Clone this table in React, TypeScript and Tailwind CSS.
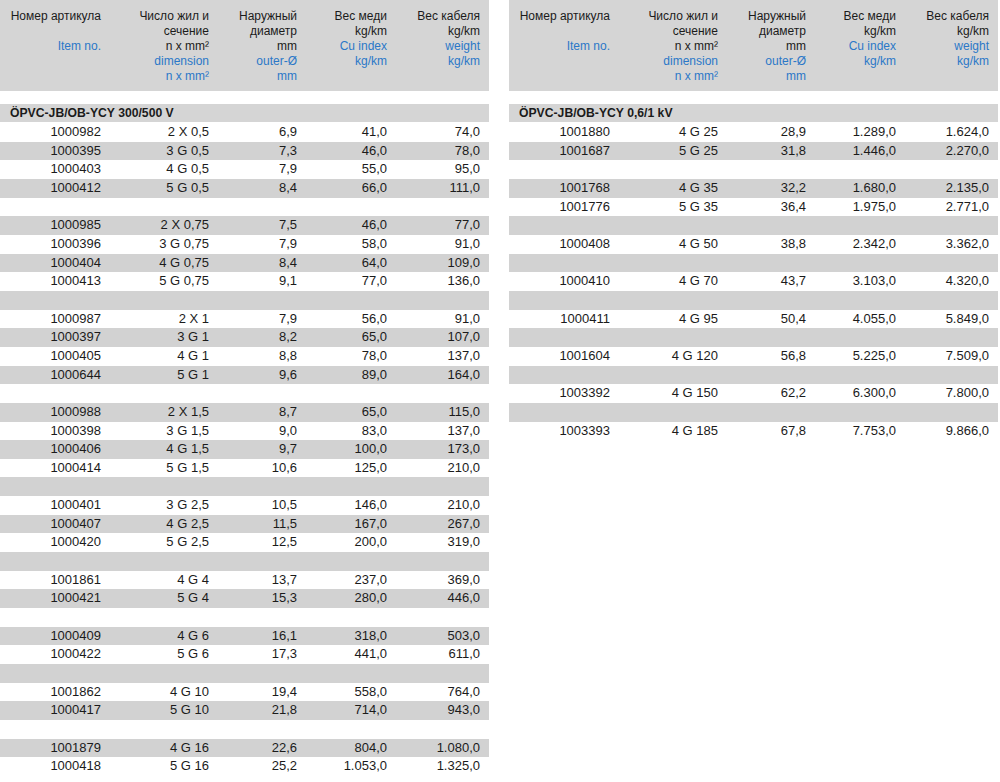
type Row = [string, string, string, string, string] | null;

const LEFT_ROWS: Row[] = [
  ["1000982", "2 X 0,5", "6,9", "41,0", "74,0"],
  ["1000395", "3 G 0,5", "7,3", "46,0", "78,0"],
  ["1000403", "4 G 0,5", "7,9", "55,0", "95,0"],
  ["1000412", "5 G 0,5", "8,4", "66,0", "111,0"],
  null,
  ["1000985", "2 X 0,75", "7,5", "46,0", "77,0"],
  ["1000396", "3 G 0,75", "7,9", "58,0", "91,0"],
  ["1000404", "4 G 0,75", "8,4", "64,0", "109,0"],
  ["1000413", "5 G 0,75", "9,1", "77,0", "136,0"],
  null,
  ["1000987", "2 X 1", "7,9", "56,0", "91,0"],
  ["1000397", "3 G 1", "8,2", "65,0", "107,0"],
  ["1000405", "4 G 1", "8,8", "78,0", "137,0"],
  ["1000644", "5 G 1", "9,6", "89,0", "164,0"],
  null,
  ["1000988", "2 X 1,5", "8,7", "65,0", "115,0"],
  ["1000398", "3 G 1,5", "9,0", "83,0", "137,0"],
  ["1000406", "4 G 1,5", "9,7", "100,0", "173,0"],
  ["1000414", "5 G 1,5", "10,6", "125,0", "210,0"],
  null,
  ["1000401", "3 G 2,5", "10,5", "146,0", "210,0"],
  ["1000407", "4 G 2,5", "11,5", "167,0", "267,0"],
  ["1000420", "5 G 2,5", "12,5", "200,0", "319,0"],
  null,
  ["1001861", "4 G 4", "13,7", "237,0", "369,0"],
  ["1000421", "5 G 4", "15,3", "280,0", "446,0"],
  null,
  ["1000409", "4 G 6", "16,1", "318,0", "503,0"],
  ["1000422", "5 G 6", "17,3", "441,0", "611,0"],
  null,
  ["1001862", "4 G 10", "19,4", "558,0", "764,0"],
  ["1000417", "5 G 10", "21,8", "714,0", "943,0"],
  null,
  ["1001879", "4 G 16", "22,6", "804,0", "1.080,0"],
  ["1000418", "5 G 16", "25,2", "1.053,0", "1.325,0"],
];

const RIGHT_ROWS: Row[] = [
  ["1001880", "4 G 25", "28,9", "1.289,0", "1.624,0"],
  ["1001687", "5 G 25", "31,8", "1.446,0", "2.270,0"],
  null,
  ["1001768", "4 G 35", "32,2", "1.680,0", "2.135,0"],
  ["1001776", "5 G 35", "36,4", "1.975,0", "2.771,0"],
  null,
  ["1000408", "4 G 50", "38,8", "2.342,0", "3.362,0"],
  null,
  ["1000410", "4 G 70", "43,7", "3.103,0", "4.320,0"],
  null,
  ["1000411", "4 G 95", "50,4", "4.055,0", "5.849,0"],
  null,
  ["1001604", "4 G 120", "56,8", "5.225,0", "7.509,0"],
  null,
  ["1003392", "4 G 150", "62,2", "6.300,0", "7.800,0"],
  null,
  ["1003393", "4 G 185", "67,8", "7.753,0", "9.866,0"],
];

const GRID = "grid grid-cols-[101px_108px_88px_90px_93px]";

// each header column: 5 lines, black or blue, empty string = blank line
const HEAD: [string, boolean][][] = [
  [["Номер артикула", false], ["", false], ["Item no.", true], ["", false], ["", false]],
  [["Число жил и", false], ["сечение", false], ["n x mm²", false], ["dimension", true], ["n x mm²", true]],
  [["Наружный", false], ["диаметр", false], ["mm", false], ["outer-Ø", true], ["mm", true]],
  [["Вес меди", false], ["kg/km", false], ["Cu index", true], ["kg/km", true], ["", false]],
  [["Вес кабеля", false], ["kg/km", false], ["weight", true], ["kg/km", true], ["", false]],
];

function CableTable({ title, rows }: { title: string; rows: Row[] }) {
  return (
    <div className="w-[489px] shrink-0">
      <div className={`${GRID} bg-[#d5d5d5] pt-[9px] pb-[7px] text-[12px]`}>
        {HEAD.map((col, i) => (
          <div key={i} className="flex flex-col items-end">
            {col.map(([text, blue], j) => (
              <div
                key={j}
                className={`h-[15px] leading-[15px] whitespace-nowrap ${blue ? "text-[#2b78c8]" : "text-[#1b1b1b]"}`}
              >
                {text}
              </div>
            ))}
          </div>
        ))}
      </div>
      <div className="mt-[13px] h-[18px] bg-[#d5d5d5] pl-[10px] text-[12.2px] leading-[18px] font-bold text-[#1b1b1b]">
        {title}
      </div>
      <div className="pt-px">
        {rows.map((row, i) => (
          <div
            key={i}
            className={`${GRID} h-[18.67px] text-[13px] leading-[18.67px] text-[#1b1b1b] ${i % 2 === 1 ? "bg-[#d2d2d2]" : "bg-white"}`}
          >
            {row &&
              row.map((cell, j) => (
                <div key={j} className="text-right whitespace-nowrap">
                  {cell}
                </div>
              ))}
          </div>
        ))}
      </div>
    </div>
  );
}

export default function App() {
  return (
    <div className="flex h-[782px] w-[1000px] gap-[20px] overflow-hidden bg-white font-['Liberation_Sans',Arial,sans-serif]">
      <CableTable title="ÖPVC-JB/OB-YCY 300/500 V" rows={LEFT_ROWS} />
      <CableTable title="ÖPVC-JB/OB-YCY 0,6/1 kV" rows={RIGHT_ROWS} />
    </div>
  );
}
